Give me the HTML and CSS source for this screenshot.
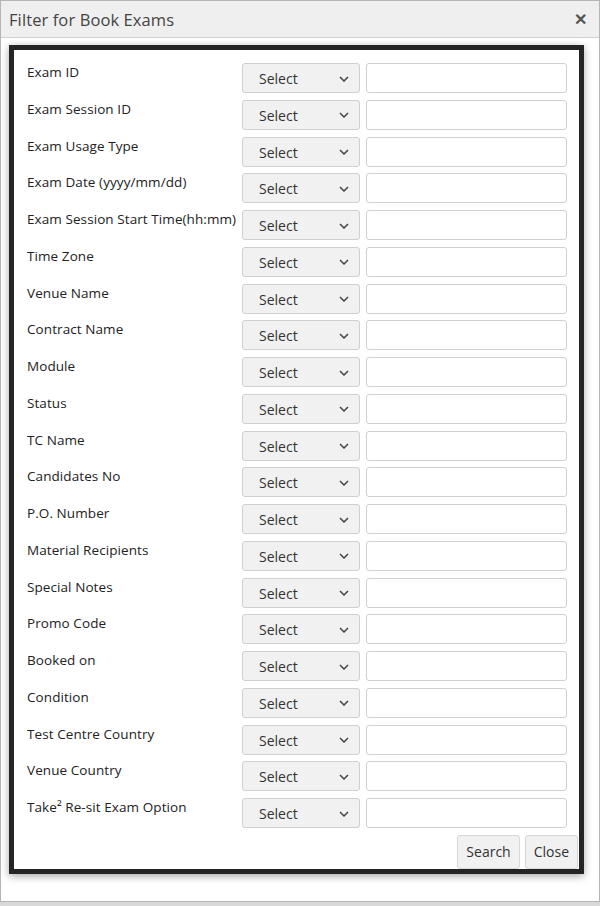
FILE: index.html
```html
<!DOCTYPE html>
<html>
<head>
<meta charset="utf-8">
<link rel="stylesheet" href="styles.css">
</head>
<body>
<div class="dialog">
  <div class="dialog-header">
    <span class="dialog-title">Filter for Book Exams</span>
    <span class="dialog-close">&#x2715;</span>
  </div>
  <div class="dialog-body">
    <div class="frame">
      <div class="rows" id="rows"></div>
      <div class="actions">
        <button class="btn">Search</button>
        <button class="btn">Close</button>
      </div>
    </div>
  </div>
</div>
<script>
var labels = ["Exam ID","Exam Session ID","Exam Usage Type","Exam Date (yyyy/mm/dd)","Exam Session Start Time(hh:mm)","Time Zone","Venue Name","Contract Name","Module","Status","TC Name","Candidates No","P.O. Number","Material Recipients","Special Notes","Promo Code","Booked on","Condition","Test Centre Country","Venue Country","Take\u00b2 Re-sit Exam Option"];
var html = "";
labels.forEach(function(l){
  html += '<div class="row"><div class="label">' + l + '</div>' +
    '<div class="select"><span>Select</span><svg class="chev" width="10" height="6" viewBox="0 0 10 6"><path d="M1 1 L5 5 L9 1" fill="none" stroke="#444" stroke-width="1.5"/></svg></div>' +
    '<div class="input"></div></div>';
});
document.getElementById("rows").innerHTML = html;
</script>
</body>
</html>
```
FILE: styles.css
```css
html, body {
  margin: 0;
  padding: 0;
  background: #d9d9d9;
  font-family: "Open Sans", "Noto Sans", sans-serif;
}
.dialog {
  width: 600px;
  height: 902px;
  box-sizing: border-box;
  border: 1px solid #b5b5b5;
  background: #fff;
  display: flex;
  flex-direction: column;
}
.dialog-header {
  height: 36px;
  background: #efefef;
  border-bottom: 1px solid #cfcfcf;
  display: flex;
  align-items: center;
  justify-content: space-between;
  padding: 0 12px 0 8px;
  flex-shrink: 0;
}
.dialog-title {
  font-size: 16.5px;
  letter-spacing: 0.1px;
  color: #444;
}
.dialog-close {
  font-size: 16px;
  font-weight: bold;
  color: #555;
}
.dialog-body {
  padding: 7px 15px 0 8px;
}
.frame {
  border: 5.5px solid #252525;
  box-shadow: 0 2px 8px rgba(0,0,0,0.35);
  background: #fff;
  padding: 13px 12px 0 13px;
  display: flex;
  flex-direction: column;
}
.rows {
  display: flex;
  flex-direction: column;
  gap: 6.75px;
}
.row {
  display: flex;
  align-items: flex-start;
  height: 30px;
}
.label {
  flex: 1;
  font-size: 13.5px;
  font-weight: 500;
  line-height: 18px;
  color: #222;
  white-space: nowrap;
  letter-spacing: 0.08px;
}
.select {
  width: 118px;
  height: 30px;
  box-sizing: border-box;
  background: #f1f1f1;
  border: 1px solid #d0d0d0;
  border-radius: 3px;
  display: flex;
  align-items: center;
  justify-content: space-between;
  padding: 1px 10px 0 16px;
  font-size: 14px;
  color: #333;
}
.chev {
  display: block;
}
.input {
  width: 201px;
  height: 30px;
  box-sizing: border-box;
  margin-left: 6px;
  background: #fff;
  border: 1px solid #d0d0d0;
  border-radius: 3px;
}
.actions {
  display: flex;
  justify-content: flex-end;
  gap: 5px;
  margin-top: 6.5px;
  margin-right: -11px;
}
.btn {
  font-family: "Open Sans", "Noto Sans", sans-serif;
  font-size: 14px;
  color: #333;
  height: 34px;
  background: #f1f1f1;
  border: 1px solid #d6d6d6;
  border-radius: 3px;
  padding: 0 8px;
}
```
